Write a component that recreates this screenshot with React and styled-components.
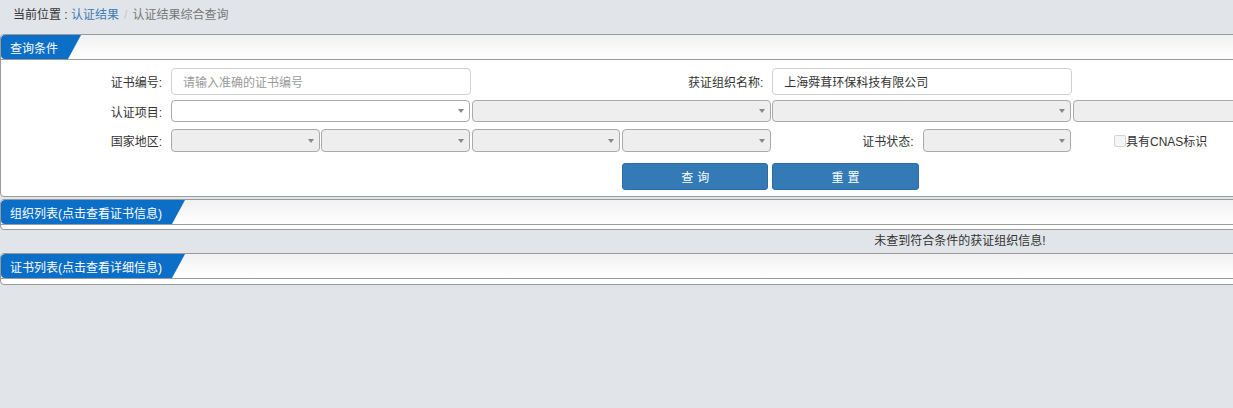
import styled, { createGlobalStyle } from 'styled-components'

const GlobalStyle = createGlobalStyle`
  html, body {
    margin: 0;
    padding: 0;
    overflow: hidden;
    background: #e1e5e9;
    font-family: "Liberation Sans", "Noto Sans CJK SC", sans-serif;
    font-size: 12px;
    color: #333;
  }
`

const Page = styled.div`
  width: 1920px;
  min-height: 408px;
`

const Crumbs = styled.div`
  height: 34px;
  line-height: 31px;
  padding-left: 13px;
  color: #333;

  a {
    color: #3b7bb6;
    text-decoration: none;
  }
`

const Sep = styled.span`
  color: #c8c8c8;
  padding: 0 5px;
`

const Current = styled.span`
  color: #777;
`

const Panel = styled.div`
  background: #fff;
  border: 1px solid #9a9a9a;
  border-radius: 4px;
  margin-top: ${(p) => p.$top || 0}px;
  overflow: hidden;
`

const PanelHead = styled.div`
  display: flex;
  height: 24px;
  border-bottom: 1px solid #9a9a9a;
  background: linear-gradient(#f1f1f1, #fff);
`

const Tab = styled.div`
  display: flex;
  align-items: center;
  height: 24px;
  padding: 0 23px 0 9px;
  background: #0b6ec7;
  color: #fff;
  font-size: 12px;
  border-radius: 4px 0 0 4px;
  clip-path: polygon(0 0, 100% 0, calc(100% - 13px) 100%, 0 100%);
`

const PanelBody = styled.div`
  height: ${(p) => p.$h}px;
`

const Form = styled.div`
  display: grid;
  grid-template-columns: 170px repeat(11, 150.33px);
  grid-template-rows: 27px 27px 30px 38px;
  align-items: end;
  padding: 8px 0 6px;
`

const Row = styled.div`
  display: contents;
`

const Label = styled.div`
  grid-column: ${(p) => p.$col} / span 1;
  grid-row: ${(p) => p.$row};
  height: ${(p) => p.$h || 27}px;
  display: flex;
  align-items: center;
  justify-content: flex-end;
  padding-right: 9px;
`

const Input = styled.div`
  grid-column: ${(p) => p.$col} / span ${(p) => p.$span || 1};
  grid-row: ${(p) => p.$row};
  box-sizing: border-box;
  width: calc(100% - 1px);
  height: 27px;
  display: flex;
  align-items: center;
  padding-left: 11px;
  border: 1px solid #cfcfcf;
  border-radius: 4px;
  background: #fff;
  color: ${(p) => (p.$placeholder ? '#9a9a9a' : '#333')};
`

const Select = styled.div`
  grid-column: ${(p) => p.$col} / span ${(p) => p.$span || 1};
  grid-row: ${(p) => p.$row};
  box-sizing: border-box;
  width: calc(100% - 1.5px);
  height: ${(p) => p.$h || 22}px;
  display: flex;
  align-items: center;
  justify-content: flex-end;
  padding-right: 5px;
  border: 1px solid #aaa;
  border-radius: 4px;
  background: ${(p) => (p.$white ? '#fff' : '#eee')};
`

const Arrow = styled.span`
  width: 0;
  height: 0;
  border-left: 3px solid transparent;
  border-right: 3px solid transparent;
  border-top: 4px solid #888;
`

const Check = styled.label`
  grid-column: ${(p) => p.$col} / span 2;
  grid-row: ${(p) => p.$row};
  height: 23px;
  display: flex;
  align-items: center;
  padding-left: 41px;
`

const Box = styled.span`
  width: 10px;
  height: 10px;
  border: 1px solid #d4d4d4;
  border-radius: 2px;
  background: #f6f6f6;
`

const Button = styled.button`
  grid-column: ${(p) => p.$col} / span 1;
  grid-row: ${(p) => p.$row};
  box-sizing: border-box;
  width: calc(100% - 4px);
  height: 27px;
  border: 1px solid #2e6da4;
  border-radius: 3px;
  background: #337ab7;
  color: #fff;
  font-family: inherit;
  font-size: 12px;
  letter-spacing: 4px;
  text-indent: 4px;
`

const Message = styled.div`
  height: 23px;
  line-height: 23px;
  text-align: center;
  color: #333;
`

const Sel = (props) => (
  <Select {...props}>
    <Arrow />
  </Select>
)

export default function App() {
  return (
    <Page>
      <GlobalStyle />
      <Crumbs>
        当前位置 : <a href="#">认证结果</a>
        <Sep>/</Sep>
        <Current>认证结果综合查询</Current>
      </Crumbs>

      <Panel>
        <PanelHead>
          <Tab>查询条件</Tab>
        </PanelHead>
        <PanelBody $h={136}>
          <Form>
            <Row>
              <Label $col={1} $row={1}>证书编号:</Label>
              <Input $col={2} $span={2} $row={1} $placeholder>请输入准确的证书编号</Input>
              <Label $col={5} $row={1}>获证组织名称:</Label>
              <Input $col={6} $span={2} $row={1}>上海舜茸环保科技有限公司</Input>
            </Row>
            <Row>
              <Label $col={1} $row={2} $h={22}>认证项目:</Label>
              <Sel $col={2} $span={2} $row={2} $white />
              <Sel $col={4} $span={2} $row={2} />
              <Sel $col={6} $span={2} $row={2} />
              <Sel $col={8} $span={2} $row={2} />
            </Row>
            <Row>
              <Label $col={1} $row={3} $h={23}>国家地区:</Label>
              <Sel $col={2} $row={3} $h={23} />
              <Sel $col={3} $row={3} $h={23} />
              <Sel $col={4} $row={3} $h={23} />
              <Sel $col={5} $row={3} $h={23} />
              <Label $col={6} $row={3} $h={23}>证书状态:</Label>
              <Sel $col={7} $row={3} $h={23} />
              <Check $col={8} $row={3}>
                <Box />
                具有CNAS标识
              </Check>
            </Row>
            <Row>
              <Button $col={5} $row={4}>查询</Button>
              <Button $col={6} $row={4}>重置</Button>
            </Row>
          </Form>
        </PanelBody>
      </Panel>

      <Panel $top={2}>
        <PanelHead>
          <Tab>组织列表(点击查看证书信息)</Tab>
        </PanelHead>
        <PanelBody $h={4} />
      </Panel>

      <Message>未查到符合条件的获证组织信息!</Message>

      <Panel>
        <PanelHead>
          <Tab>证书列表(点击查看详细信息)</Tab>
        </PanelHead>
        <PanelBody $h={5} />
      </Panel>
    </Page>
  )
}
